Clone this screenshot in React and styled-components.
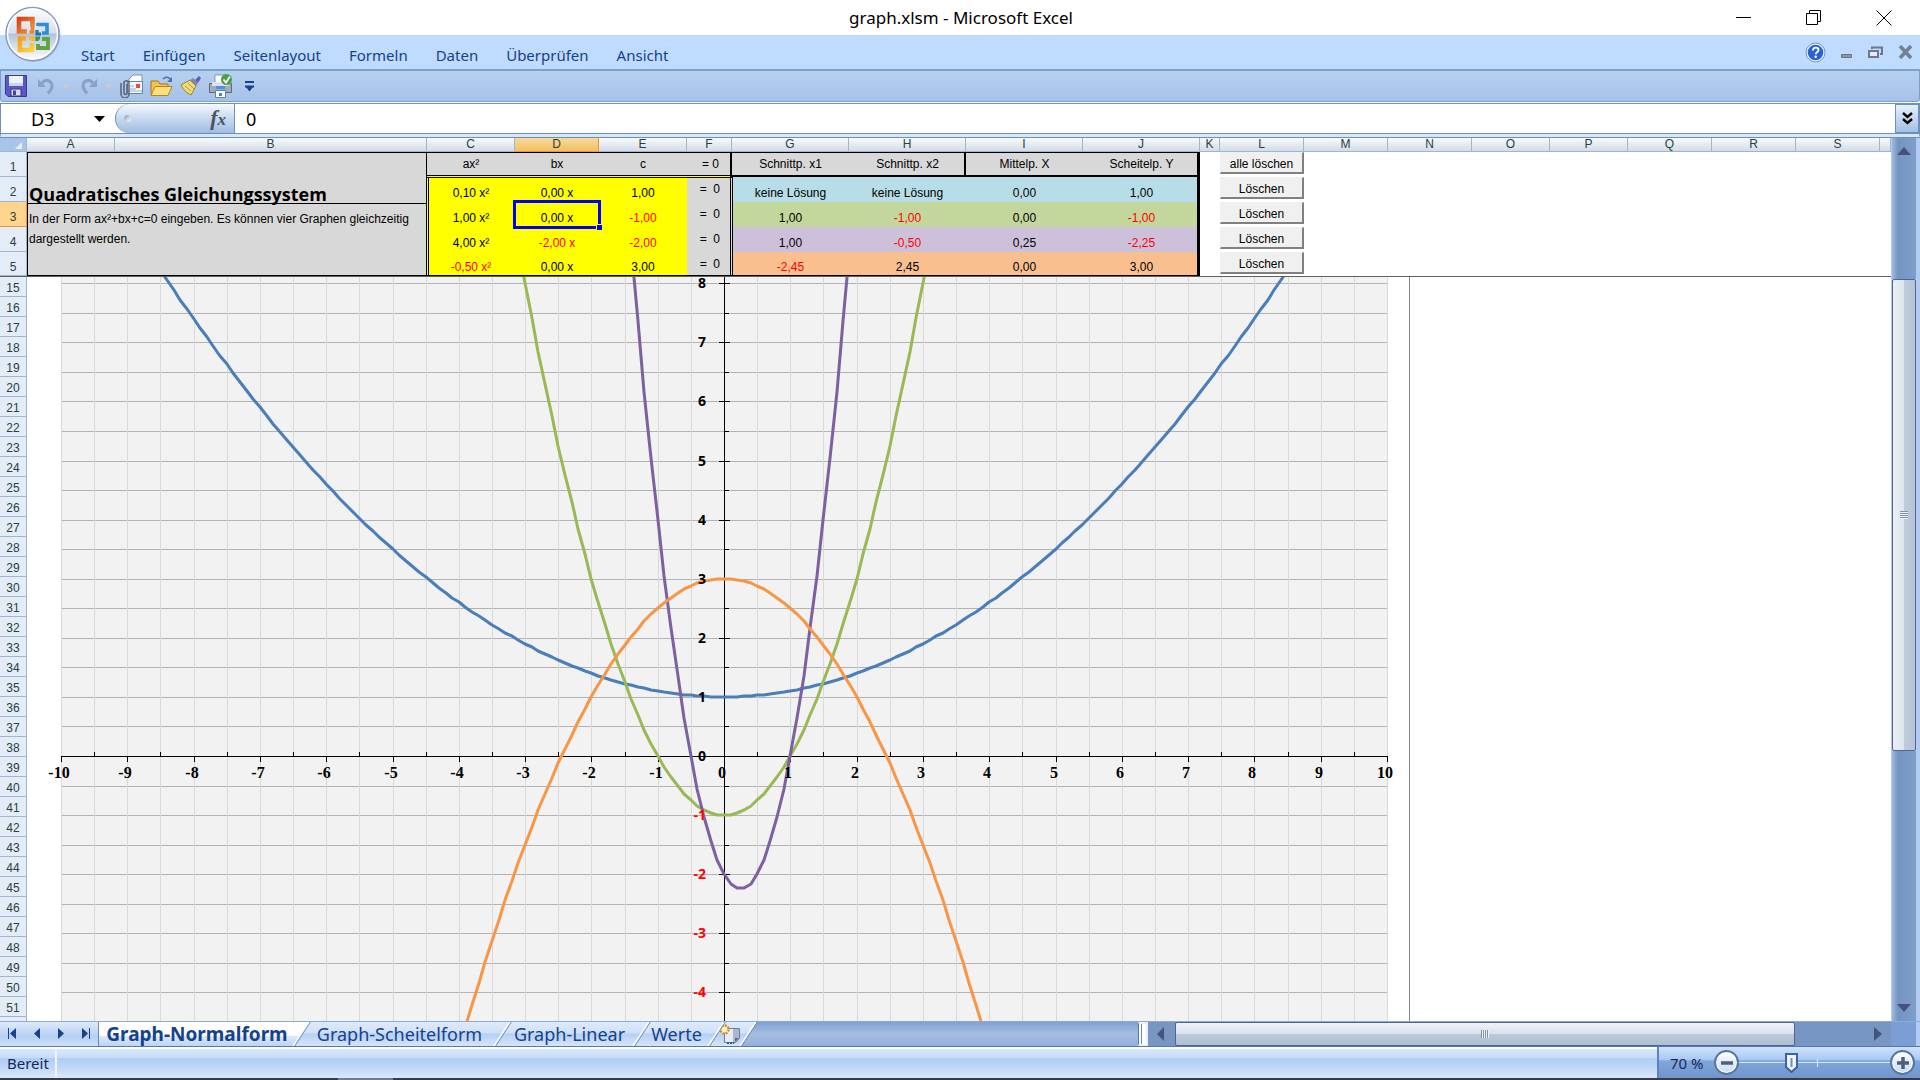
import { useState } from "react";
import styled, { createGlobalStyle, css } from "styled-components";

const columns = [
    ["A", 88], ["B", 312], ["C", 88], ["D", 84], ["E", 88], ["F", 45],
    ["G", 117], ["H", 117], ["I", 117], ["J", 117], ["K", 20], ["L", 84],
    ["M", 84], ["N", 84], ["O", 78], ["P", 78], ["Q", 84], ["R", 84], ["S", 84],
];

const rows = [
    { nr: 2, color: "#b7dde8", input: ["0,10 x²", "0,00 x", "1,00"], result: ["keine Lösung", "keine Lösung", "0,00", "1,00"] },
    { nr: 3, color: "#c3d69b", input: ["1,00 x²", "0,00 x", "-1,00"], result: ["1,00", "-1,00", "0,00", "-1,00"] },
    { nr: 4, color: "#ccc0da", input: ["4,00 x²", "-2,00 x", "-2,00"], result: ["1,00", "-0,50", "0,25", "-2,25"] },
    { nr: 5, color: "#fabf8f", input: ["-0,50 x²", "0,00 x", "3,00"], result: ["-2,45", "2,45", "0,00", "3,00"] },
];

const curves = [
    { a: 0.1, b: 0, c: 1, color: "#4a7ebb" },
    { a: 1, b: 0, c: -1, color: "#98b954" },
    { a: 4, b: -2, c: -2, color: "#7d60a0" },
    { a: -0.5, b: 0, c: 3, color: "#f79646" },
];

const menu = ["Start", "Einfügen", "Seitenlayout", "Formeln", "Daten", "Überprüfen", "Ansicht"];

const sheets = [
    ["Graph-Normalform", 204],
    ["Graph-Scheitelform", 201],
    ["Graph-Linear", 139],
    ["Werte", 75],
];

const lowerRows = Array.from({ length: 37 }, (_, i) => i + 15);

//coordinate system: origin and length of one unit
const originX = 697;
const originY = 479;
const unitX = 66.3;
const unitY = 59.1;
const toX = (x) => Math.round(originX + x * unitX);
const toY = (y) => Math.round(originY - y * unitY);

const range = (from, to, step) => {
    const list = [];
    for (let i = 0; i <= Math.round((to - from) / step); i++) list.push(from + i * step);
    return list;
};

const Chart = () => (
    <ChartSvg width="1383" height="980" aria-label="Graphen">
        <rect x={toX(-10)} y="0" width={toX(10) - toX(-10)} height="980" fill="#f2f2f2" />
        {range(-8, 8.5, 0.5).map((y) => (
            <path key={y} d={`M${toX(-10)} ${toY(y) + 0.5}H${toX(10)}`} stroke="#b3b3b3" />
        ))}
        {range(-10, 10, 0.5).map((x) => (
            <path key={x} d={`M${toX(x) + 0.5} 0V980`} stroke="#d9d9d9" />
        ))}
        <path d={`M${toX(-10)} ${originY + 0.5}H${toX(10)}M${originX + 0.5} 0V980`} stroke="#000" />
        {range(-10, 10, 0.5).map((x) => (
            <path key={x} d={`M${toX(x) + 0.5} ${originY}v${Number.isInteger(x) ? 6 : -4}`} stroke="#000" />
        ))}
        {range(-8, 8, 0.5).map((y) => (
            <path
                key={y}
                d={Number.isInteger(y) ? `M${originX - 5} ${toY(y) + 0.5}h11` : `M${originX} ${toY(y) + 0.5}h5`}
                stroke="#000"
            />
        ))}
        {curves.map(({ a, b, c, color }) => (
            <polyline
                key={color}
                points={range(-10, 10, 0.1)
                    .map((x) => [toX(x), toY(a * x * x + b * x + c)])
                    .filter(([, y]) => y > -400 && y < 1400)
                    .map((p) => p.join(","))
                    .join(" ")}
                fill="none"
                stroke={color}
                strokeWidth="3"
                strokeLinejoin="round"
            />
        ))}
        {range(-10, 10, 1).map((x) => (
            <AxisX key={x} x={toX(x) - 2} y={originY + 22} textAnchor="middle">{x}</AxisX>
        ))}
        {range(-4, 8, 1).map((y) => (
            <AxisY key={y} x={originX - 18} y={toY(y) + 5} textAnchor="end" fill={y < 0 ? "#f00" : "#000"}>{y}</AxisY>
        ))}
        <path d="M1382.5 0V980" stroke="#868686" />
    </ChartSvg>
);

const OfficeLogo = () => (
    <svg width="56" height="57" viewBox="0 0 56 57">
        <defs>
            <linearGradient id="orb" x1="0" y1="0" x2="0" y2="1">
                <stop offset="0" stopColor="#fdfeff" />
                <stop offset=".48" stopColor="#d7dfec" />
                <stop offset=".5" stopColor="#b3c2dc" />
                <stop offset="1" stopColor="#fff" />
            </linearGradient>
            <linearGradient id="orange" x1="0" y1="0" x2="1" y2="1">
                <stop offset="0" stopColor="#d8431b" />
                <stop offset="1" stopColor="#f3973a" />
            </linearGradient>
            <linearGradient id="gold" x1="0" y1="0" x2="1" y2="1">
                <stop offset="0" stopColor="#f6a11a" />
                <stop offset="1" stopColor="#fdd23a" />
            </linearGradient>
        </defs>
        <circle cx="28.500" cy="29" r="27" fill="#8f9db5" opacity=".5" />
        <circle cx="27.500" cy="28" r="26.500" fill="url(#orb)" stroke="#8398bd" strokeWidth="1.500" />
        <circle cx="27.500" cy="28" r="25" fill="none" stroke="#fff" strokeWidth="1.500" />
        <g fill="none">
            <path d="M22 25.500H14V13h13.500v8" stroke="url(#orange)" strokeWidth="4.600" />
            <path d="M27.500 21v5h-3" stroke="#f0862b" strokeWidth="3.600" />
            <path d="M33 20v-1.500h9V27h-5" stroke="#2f8fd6" strokeWidth="3.600" />
            <path d="M32 24v4h4" stroke="#1873c0" strokeWidth="3.200" />
            <path d="M21 32.500h-6V44h12v-7" stroke="url(#gold)" strokeWidth="4.600" />
            <path d="M24 32h4v3" stroke="#f9b62a" strokeWidth="3.400" />
            <path d="M37 33h6v9H33v-4" stroke="#5ea53a" strokeWidth="3.800" />
            <path d="M32 35v-3h3" stroke="#2f9a4c" strokeWidth="3.200" />
        </g>
    </svg>
);

const SaveIcon = () => (
    <svg width="22" height="22" viewBox="0 0 22 22">
        <path d="M.5.500h21v21H3l-2.500-2.500z" fill="#5b57c4" stroke="#3a3796" />
        <path d="M4 1h14v10H4z" fill="#eef3fc" />
        <path d="M4 8h14v3H4z" fill="#c9d6ee" />
        <path d="M6 14h10v7H6z" fill="#d4dbea" stroke="#38368c" />
        <path d="M8 15.500h3V20H8z" fill="#45429f" />
    </svg>
);

const UndoIcon = ({ flip }) => (
    <svg width="18" height="18" viewBox="0 0 18 18">
        <g transform={flip ? "translate(18 0) scale(-1 1)" : undefined}>
            <path d="M5 6c4-5 10-2 10 3 0 3-2 5-4 7.500" fill="none" stroke="#8aa0c6" strokeWidth="3" />
            <path d="M1 2v8h8z" fill="#8aa0c6" />
        </g>
    </svg>
);

const MailIcon = () => (
    <svg width="25" height="24" viewBox="0 0 25 24">
        <path d="M10 5l4-4h9v8H10z" fill="#fff" stroke="#7891ba" />
        <path d="M8.500 7.500h15v12h-15z" fill="#f4f8fe" stroke="#6782b0" />
        <path d="M17 10h4v4h-4z" fill="#e2502c" />
        <path d="M11 12h4M11 15h6M9 17h14" stroke="#97add2" />
        <path d="M8 10v9a1.500 1.500 0 0 1-3 0V8a3 3 0 0 1 5 0v12a4 4 0 0 1-8 0V9" fill="none" stroke="#56617a" strokeWidth="1.500" />
    </svg>
);

const FolderIcon = () => (
    <svg width="24" height="22" viewBox="0 0 24 22">
        <path d="M1 19V6h7l2 3h8v11z" fill="#f3c548" stroke="#a8761b" />
        <path d="M1 20.500l4-9h17l-4 9z" fill="#fddf7c" stroke="#b5851f" />
        <path d="M13 4c3-3 6-2 8 1" fill="none" stroke="#4b74a9" strokeWidth="1.500" />
        <path d="M22 2v5h-5z" fill="#4b74a9" />
    </svg>
);

const BrushIcon = () => (
    <svg width="22" height="20" viewBox="0 0 22 20">
        <path d="M1 9l9-5 6 6-5 9c-4-2-8-5-10-10z" fill="#efdb78" stroke="#9a8130" />
        <path d="M5 10l6 5M8 7l6 6" stroke="#b89a3d" />
        <path d="M10 4l3-2 5 5-2 3z" fill="#7d8aa5" />
        <path d="M15 4l4-4 2 2-3 5z" fill="#6b58b5" />
    </svg>
);

const PrinterIcon = () => (
    <svg width="25" height="25" viewBox="0 0 25 25">
        <path d="M7 1h10v10H7z" fill="#fff" stroke="#8a96ac" />
        <path d="M1.500 9.500h22v9h-22z" fill="#a2abba" stroke="#5e6879" />
        <path d="M4 8h17v4H4z" fill="#dce2ea" />
        <path d="M8 12h9v3H8z" fill="#4593e6" />
        <path d="M7.500 16.500h10v7h-10z" fill="#fff" stroke="#68809f" />
        <path d="M11 19h3v3h-3z" fill="#3e83d4" />
        <circle cx="18.500" cy="5.500" r="5.500" fill="#4a9f49" />
        <path d="M15.500 5.500l2.500 3 4-6" fill="none" stroke="#fff" strokeWidth="1.700" />
    </svg>
);

const CustomizeIcon = () => (
    <svg width="10" height="12" viewBox="0 0 10 12">
        <path d="M0 2h9M0 6.500h9" stroke="#15428b" strokeWidth="2" />
        <path d="M1 7h7l-3.500 4.500z" fill="#15428b" />
    </svg>
);

const HelpIcon = () => (
    <svg width="21" height="21" viewBox="0 0 21 21">
        <circle cx="10.500" cy="10.500" r="9.500" fill="#e8f1fc" stroke="#7396c7" />
        <circle cx="10.500" cy="10.500" r="7.800" fill="#2a63d4" />
        <path d="M8 8.500c0-4 5.500-3.500 5.500-.5 0 2-2.700 2-2.700 4.300" fill="none" stroke="#fff" strokeWidth="1.900" />
        <circle cx="10.700" cy="14.800" r="1.200" fill="#fff" />
    </svg>
);

const ArrowIcon = ({ d, width = 8, height = 14 }) => (
    <svg width={width} height={height} viewBox={`0 0 ${width} ${height}`}>
        <path d={d} fill="currentColor" />
    </svg>
);

const NewSheetIcon = () => (
    <svg width="22" height="20" viewBox="0 0 22 20">
        <path d="M5.500 4.500h15v10l-4 4h-11z" fill="#e6ecf6" stroke="#6d7c98" />
        <path d="M14 5h6v9l-4 4h-2z" fill="#a9b7cf" />
        <path d="M20 14l-4 4v-4z" fill="#5c6a87" />
        <path d="M8 19h7" stroke="#46536f" strokeDasharray="2 1" strokeWidth="2" />
        <circle cx="5.500" cy="5.500" r="4" fill="#fff3c4" stroke="#cf8a1c" strokeWidth="2.400" strokeDasharray="2 1.100" />
    </svg>
);

const isNegative = (text) => text.startsWith("-");

const App = () => {
    const [value, setValue] = useState("0");
    const [zoom, setZoom] = useState(70);

    return (
        <Window>
            <GlobalStyle />
            <TitleBar>
                <OfficeButton aria-label="Office"><OfficeLogo /></OfficeButton>
                <Title>graph.xlsm - Microsoft Excel</Title>
                <WindowButtons>
                    <IconButton aria-label="Minimieren">
                        <svg width="16" height="16"><path d="M0 7.500h15" stroke="#000" /></svg>
                    </IconButton>
                    <IconButton aria-label="Wiederherstellen">
                        <svg width="16" height="16">
                            <path d="M.5 3.500h11v11H.500zM3.500 3.500V.500h11v11h-3" fill="none" stroke="#000" />
                        </svg>
                    </IconButton>
                    <IconButton aria-label="Schließen">
                        <svg width="16" height="16"><path d="M.5.500l15 15M15.500.500l-15 15" stroke="#000" /></svg>
                    </IconButton>
                </WindowButtons>
            </TitleBar>

            <Ribbon>
                <Menu>
                    {menu.map((item) => <MenuLink href="#" key={item}>{item}</MenuLink>)}
                </Menu>
                <MdiButtons>
                    <IconButton aria-label="Hilfe"><HelpIcon /></IconButton>
                    <IconButton aria-label="Mappe minimieren">
                        <svg width="12" height="14"><path d="M.5 9.500h10v3H.500z" fill="#8c96a4" stroke="#6d7785" /></svg>
                    </IconButton>
                    <IconButton aria-label="Mappe wiederherstellen">
                        <svg width="15" height="13">
                            <path d="M4 3V1.500h10V8h-2" fill="none" stroke="#6f7986" strokeWidth="2" />
                            <path d="M1 5h9v6H1z" fill="#e3ebf5" stroke="#6f7986" strokeWidth="2" />
                        </svg>
                    </IconButton>
                    <IconButton aria-label="Mappe schließen">
                        <svg width="15" height="14"><path d="M2 1l11 12M13 1L2 13" stroke="#76808e" strokeWidth="3.600" /></svg>
                    </IconButton>
                </MdiButtons>
            </Ribbon>

            <QuickAccess>
                <IconButton aria-label="Speichern"><SaveIcon /></IconButton>
                <IconGroup>
                    <IconButton aria-label="Rückgängig"><UndoIcon /></IconButton>
                    <Faded><ArrowIcon d="M0 0h8L4 5z" height={5} /></Faded>
                </IconGroup>
                <IconGroup>
                    <IconButton aria-label="Wiederholen"><UndoIcon flip /></IconButton>
                    <Faded><ArrowIcon d="M0 0h8L4 5z" height={5} /></Faded>
                </IconGroup>
                <IconButton aria-label="E-Mail"><MailIcon /></IconButton>
                <IconButton aria-label="Öffnen"><FolderIcon /></IconButton>
                <IconButton aria-label="Format übertragen"><BrushIcon /></IconButton>
                <IconButton aria-label="Drucken"><PrinterIcon /></IconButton>
                <Customize aria-label="Anpassen"><CustomizeIcon /></Customize>
            </QuickAccess>

            <FormulaBar>
                <NameBox>
                    <NameInput aria-label="Namenfeld" defaultValue="D3" />
                    <ArrowIcon d="M0 0h11L5.500 6z" width={11} height={6} />
                </NameBox>
                <FormulaTools>
                    <Knob />
                    <Fx aria-label="Funktion einfügen">f<small>x</small></Fx>
                </FormulaTools>
                <FormulaInput aria-label="Formel" value={value} onChange={(e) => setValue(e.target.value)} />
                <Expand aria-label="Erweitern">
                    <svg width="11" height="13">
                        <path d="M1 1l4.500 4L10 1M1 7l4.500 4L10 7" fill="none" stroke="#000" strokeWidth="2.400" />
                    </svg>
                </Expand>
            </FormulaBar>

            <Workbook>
                <Sheet>
                    <Frozen>
                        <colgroup>
                            <Col $w={27} />
                            {columns.map(([name, w]) => <Col key={name} $w={w} />)}
                            <col />
                        </colgroup>
                        <thead>
                            <tr>
                                <Corner><svg width="26" height="13"><path d="M22 4v7h-7z" fill="#e8f0fb" /></svg></Corner>
                                {columns.map(([name]) => (
                                    <ColHead key={name} $active={name === "D"}>{name}</ColHead>
                                ))}
                                <ColHead />
                            </tr>
                        </thead>
                        <tbody>
                            <tr>
                                <RowHead>1</RowHead>
                                <Info colSpan={2} rowSpan={5}>
                                    <Heading>Quadratisches Gleichungssystem</Heading>
                                    <Hint>In der Form ax²+bx+c=0 eingeben. Es können vier Graphen gleichzeitig dargestellt werden.</Hint>
                                </Info>
                                <Label $double>ax²</Label>
                                <Label $double>bx</Label>
                                <Label $double>c</Label>
                                <Label $double $right $line={2}>= 0</Label>
                                <Label>Schnittp. x1</Label>
                                <Label $line={2}>Schnittp. x2</Label>
                                <Label>Mittelp. X</Label>
                                <Label $line={3}>Scheitelp. Y</Label>
                                <td />
                                <td><ClearButton>alle löschen</ClearButton></td>
                            </tr>
                            {rows.map(({ nr, color, input, result }) => (
                                <tr key={nr}>
                                    <RowHead $active={nr === 3}>{nr}</RowHead>
                                    {input.map((text, i) => (
                                        <Input key={i} $red={isNegative(text)} $first={i === 0} $top={nr === 2} $bottom={nr === 5}>
                                            {text}
                                            {nr === 3 && i === 1 && <Selection />}
                                        </Input>
                                    ))}
                                    <Equals $top={nr === 2} $bottom={nr === 5}>=&nbsp; 0</Equals>
                                    {result.map((text, i) => (
                                        <Result key={i} $color={color} $red={isNegative(text)} $first={i === 0} $last={i === 3} $bottom={nr === 5}>
                                            {text}
                                        </Result>
                                    ))}
                                    <td />
                                    <td><ClearButton>Löschen</ClearButton></td>
                                </tr>
                            ))}
                        </tbody>
                    </Frozen>
                    <Lower>
                        <LowerHeads>
                            {lowerRows.map((nr) => <LowerHead key={nr}>{nr}</LowerHead>)}
                            <LowerHead />
                        </LowerHeads>
                        <Chart />
                    </Lower>
                </Sheet>
                <VScroll>
                    <VBefore><ArrowIcon d="M0 8L7 0l7 8z" width={14} height={8} /></VBefore>
                    <VThumb><Grip /></VThumb>
                    <VAfter><ArrowIcon d="M0 0h14L7 8z" width={14} height={8} /></VAfter>
                </VScroll>
            </Workbook>

            <TabBar>
                <TabNav>
                    <IconButton aria-label="Erstes Blatt"><ArrowIcon d="M0 1h1v11H0zM8 1v11L2 6.500z" /></IconButton>
                    <IconButton aria-label="Vorheriges Blatt"><ArrowIcon d="M7 1v11L1 6.500z" /></IconButton>
                    <IconButton aria-label="Nächstes Blatt"><ArrowIcon d="M1 1v11l6-5.500z" /></IconButton>
                    <IconButton aria-label="Letztes Blatt"><ArrowIcon d="M0 1v11l6-5.500zM7 1h1v11H7z" /></IconButton>
                </TabNav>
                {sheets.map(([name, w], i) => (
                    <Tab key={name} $w={w} $active={i === 0} $z={9 - i}>{name}</Tab>
                ))}
                <Tab $w={32} $z={1} aria-label="Neues Blatt"><NewSheetIcon /></Tab>
                <TabSpace />
                <HScroll>
                    <Splitter />
                    <HEnd><ArrowIcon d="M7 0v14L0 7z" /></HEnd>
                    <HTrack><HThumb><Grip $turned /></HThumb></HTrack>
                    <HEnd><ArrowIcon d="M0 0v14l8-7z" /></HEnd>
                </HScroll>
                <TabCorner />
            </TabBar>

            <StatusBar>
                <Status>Bereit</Status>
                <ZoomArea>
                    <ZoomLabel htmlFor="zoom">{zoom} %</ZoomLabel>
                    <RoundButton aria-label="Verkleinern" onClick={() => setZoom(Math.max(10, zoom - 10))}>
                        <svg width="12" height="12"><path d="M0 6h12" stroke="#4c5f7d" strokeWidth="3.500" /></svg>
                    </RoundButton>
                    <ZoomRange id="zoom" type="range" min="10" max="190" value={zoom} onChange={(e) => setZoom(Number(e.target.value))} />
                    <RoundButton aria-label="Vergrößern" onClick={() => setZoom(Math.min(190, zoom + 10))}>
                        <svg width="12" height="12"><path d="M0 6h12M6 0v12" stroke="#4c5f7d" strokeWidth="3.500" /></svg>
                    </RoundButton>
                </ZoomArea>
            </StatusBar>
            <Taskbar />
        </Window>
    );
};

//--- Styling ---

const GlobalStyle = createGlobalStyle`
*, *::before, *::after {
    box-sizing: border-box;
}
body {
    margin: 0;
    background: #fff;
    font-family: "Noto Sans", "Open Sans", sans-serif;
}
button, input {
    font: inherit;
    color: inherit;
    margin: 0;
    padding: 0;
    border: 0;
    background: none;
}
svg {
    display: block;
    flex: none;
}
`

const Window = styled.div`
display: flex;
flex-direction: column;
height: 100vh;
overflow: hidden;
`

const IconButton = styled.button`
display: flex;
align-items: center;
justify-content: center;
`

const TitleBar = styled.header`
position: relative;
display: grid;
grid-template-columns: 1fr auto 1fr;
align-items: center;
flex: none;
height: 35px;
`

/* the round button hangs over the title bar and the ribbon */
const OfficeButton = styled.button`
position: absolute;
left: 5px;
top: 6px;
z-index: 2;
`

const Title = styled.h1`
grid-column: 2;
margin: 0;
padding-left: 2px;
font-size: 17px;
font-weight: 400;
line-height: 22px;
`

const WindowButtons = styled.div`
display: flex;
justify-content: flex-end;
gap: 54px;
padding-right: 28px;
`

const Ribbon = styled.div`
display: flex;
justify-content: space-between;
align-items: center;
flex: none;
height: 34px;
padding: 0 7px 0 81px;
background: #bfdbff;
`

const Menu = styled.nav`
display: flex;
gap: 28px;
padding-top: 6px;
`

const MenuLink = styled.a`
color: #15428b;
font-size: 15px;
line-height: 22px;
text-decoration: none;
`

const MdiButtons = styled.div`
display: flex;
align-items: center;
gap: 15px;
`

const QuickAccess = styled.div`
display: flex;
align-items: center;
gap: 6px;
flex: none;
height: 33px;
padding-left: 4px;
border: 1px solid #7c9fce;
border-top-width: 2px;
border-radius: 0 0 3px 3px;
background: linear-gradient(#b5d0ef, #a6c1e8);
`

const IconGroup = styled.div`
display: flex;
align-items: center;
gap: 7px;
padding-left: 4px;
`

const Faded = styled.span`
color: #c9c9cd;
`

const Customize = styled(IconButton)`
padding-left: 6px;
`

const FormulaBar = styled.div`
display: flex;
flex: none;
height: 35px;
margin-top: 1px;
border: 1px solid #6c8fbb;
border-bottom: 4px solid #d7e6f9;
box-shadow: inset 0 -1px #6c8fbb;
background: #fff;
`

const NameBox = styled.div`
display: flex;
align-items: center;
width: 114px;
padding: 0 10px 0 30px;
`

const NameInput = styled.input`
flex: 1;
min-width: 0;
font-size: 18px;
line-height: 24px;
outline: 0;
`

const FormulaTools = styled.div`
display: flex;
align-items: center;
justify-content: space-between;
width: 120px;
margin-bottom: 1px;
padding: 0 8px 0 8px;
border: 1px solid #6c8fbb;
border-width: 0 1px;
border-radius: 16px 0 0 16px;
background: linear-gradient(#f4f9ff, #c8d9ef 50%, #9fbce2);
`

const Knob = styled.span`
width: 7px;
height: 7px;
border-radius: 50%;
background: linear-gradient(135deg, #8f9bb0, #fff);
`

const Fx = styled.button`
color: #4a5361;
font: italic bold 22px/24px "Liberation Serif", serif;

small {
    font-size: 17px;
}
`

const FormulaInput = styled.input`
flex: 1;
min-width: 0;
padding-left: 11px;
font-size: 18px;
line-height: 24px;
outline: 0;
`

const Expand = styled(IconButton)`
width: 24px;
margin-bottom: 1px;
border: 1px solid #6c8fbb;
background: linear-gradient(#e6f0fc, #a3bfe5);
`

const Workbook = styled.main`
display: flex;
flex: 1;
min-height: 0;
border-top: 1px solid #6c8fbb;
margin-top: -1px;
`

const Sheet = styled.div`
display: flex;
flex-direction: column;
flex: 1;
min-width: 0;
overflow: hidden;
font: 12px/14px "Liberation Sans", Arial, sans-serif;
`

const Frozen = styled.table`
flex: none;
width: 100%;
table-layout: fixed;
border-collapse: separate;
border-spacing: 0;
border-bottom: 1px solid #606060;

td, th {
    padding: 0;
    font-weight: 400;
}

td {
    height: 25px;
    vertical-align: top;
}

tbody tr:last-child > td, tbody tr:last-child > th {
    height: 24px;
}
`

const Col = styled.col`
width: ${(props) => props.$w}px;
`

const headCell = css`
color: #27413e;
border: 0 solid #9eb6ce;
border-width: 0 1px 1px 0;
`

const Corner = styled.th`
${headCell}
height: 14px;
background: #a9c4e9;
`

const ColHead = styled.th`
${headCell}
height: 14px;
line-height: 13px;
text-align: center;
background: linear-gradient(#f8fbfd, #d3dbe9);

${(props) => props.$active && css`
    border-color: #f29536;
    background: linear-gradient(#f9d99f, #f1c15f);
`}
`

const RowHead = styled.th`
${headCell}
height: 25px;
padding-top: 6px !important;
vertical-align: middle;
background: #e4ecf7;

${(props) => props.$active && css`
    border-color: #f29536;
    background: #ffd58d;
`}
`

const Info = styled.td`
border: 1px solid #000;
background: #d8d8d8;
`

const Heading = styled.h2`
display: flex;
align-items: flex-end;
height: 51px;
margin: 0;
padding-left: 1px;
border-bottom: 1px solid #000;
font: bold 18px/18px "Open Sans", sans-serif;
white-space: nowrap;
`

const Hint = styled.p`
margin: 5px 10px 0 1px;
line-height: 20px;
`

const Label = styled.td`
background: #d8d8d8;
border-top: 1px solid #000;
line-height: 22px;
text-align: ${(props) => (props.$right ? "right" : "center")};
padding-right: ${(props) => (props.$right ? 13 : 0)}px !important;
box-shadow:
    inset -${(props) => props.$line || 0}px 0 #000,
    ${(props) => (props.$double ? "inset 0 -1px #ff0, inset 0 -2px #000" : "inset 0 -2px #000")};
`

const Value = styled.td`
position: relative;
padding-top: ${(props) => (props.$bottom ? 8 : 9)}px !important;
color: ${(props) => (props.$red ? "#f00" : "#000")};
text-align: center;
${(props) => props.$bottom && "border-bottom: 1px solid #000;"}
`

const Input = styled(Value)`
background: #ff0;
box-shadow:
    inset 0 ${(props) => (props.$top ? 1 : 0)}px #000
    ${(props) => props.$first && ", inset 1px 0 #ff0, inset 2px 0 #000"};
`

const Equals = styled(Value)`
background: #d8d8d8;
padding-top: 5px !important;
padding-right: 12px !important;
text-align: right;
box-shadow:
    inset 0 ${(props) => (props.$top ? 1 : 0)}px #000,
    inset -1px 0 #d8d8d8,
    inset -2px 0 #000;
`

const Result = styled(Value)`
background: ${(props) => props.$color};
box-shadow:
    inset ${(props) => (props.$first ? 1 : 0)}px 0 #000,
    inset ${(props) => (props.$last ? -3 : 0)}px 0 #000;
`

/* frame of the selected cell with its fill handle */
const Selection = styled.span`
position: absolute;
inset: -2px;
z-index: 1;
border: 3px solid #00f;

&::after {
    content: "";
    position: absolute;
    right: -4px;
    bottom: -4px;
    width: 6px;
    height: 6px;
    border: 1px solid #ff0;
    border-width: 1px 0 0 1px;
    background: #00f;
}
`

const ClearButton = styled.button`
display: block;
width: 100%;
height: 22px;
padding-top: 3px;
border: 1px solid #f0f0f0;
border-right: 2px solid #808080;
border-bottom: 2px solid #808080;
background: #f0f0f0;
line-height: 16px;
`

const Lower = styled.div`
display: flex;
flex: 1;
min-height: 0;
overflow: hidden;
`

const LowerHeads = styled.div`
flex: none;
width: 27px;
`

const LowerHead = styled.div`
${headCell}
height: 20px;
padding-top: 4px;
background: #e4ecf7;
text-align: center;
line-height: 14px;
`

const ChartSvg = styled.svg`
align-self: flex-start;
`

const AxisX = styled.text`
font: bold 16px "Liberation Serif", serif;
`

const AxisY = styled.text`
font: bold 14px "Open Sans", sans-serif;
`

const VScroll = styled.div`
display: flex;
flex-direction: column;
flex: none;
width: 29px;
padding: 0 4px 0 1px;
background: #b1cbf2;
color: #46527a;
`

const VBefore = styled.div`
display: flex;
justify-content: center;
height: 141px;
padding-top: 9px;
background: linear-gradient(90deg, #a0b9dc, #7494c2 25%, #7f9fca);
`

const VThumb = styled.div`
display: flex;
align-items: center;
justify-content: center;
flex: 9;
border: 1px solid #52658f;
border-radius: 2px;
background: linear-gradient(90deg, #eceff5, #dde5ef 48%, #bfccdc 50%, #b5c4d8);
`

const VAfter = styled.div`
display: flex;
align-items: flex-end;
justify-content: center;
flex: 5;
padding-bottom: 9px;
background: linear-gradient(90deg, #a0b9dc, #7494c2 25%, #7f9fca);
`

const Grip = styled.span`
width: 8px;
height: 8px;
background: repeating-linear-gradient(${(props) => (props.$turned ? "90deg" : "180deg")}, #8292ab 0 1px, #eef2f7 1px 2px);
`

const TabBar = styled.div`
display: flex;
flex: none;
height: 26px;
border-top: 1px solid #8caad6;
border-bottom: 1px solid #5478b4;
background: linear-gradient(#7fa1d1, #a5bde1 50%, #93b0dc);
`

const TabNav = styled.div`
display: flex;
align-items: center;
justify-content: space-around;
flex: none;
width: 99px;
border-right: 1px solid #6d88b5;
background: linear-gradient(#dfeafa, #b6d0f4 60%, #cfe0f8);
color: #15428b;
`

const Tab = styled.button`
position: relative;
z-index: ${(props) => props.$z};
display: flex;
align-items: center;
justify-content: center;
flex: none;
width: ${(props) => props.$w}px;
padding-right: 8px;
color: #15428b;
font-size: ${(props) => (props.$active ? 19 : 18)}px;
font-weight: ${(props) => (props.$active ? 700 : 400)};
line-height: 24px;
white-space: nowrap;

/* slanted right edge, the left part lies under the tab before it */
&::before {
    content: "";
    position: absolute;
    z-index: -1;
    inset: 0 0 0 -20px;
    transform: skewX(-33deg);
    border-right: 1px solid #6d88b5;
    box-shadow: inset -2px 0 #fff;
    background: ${(props) => (props.$active
        ? "linear-gradient(#fff 55%, #dbe8fa 60%, #bcd4f5)"
        : "linear-gradient(#dfeafa, #cfe1f9 45%, #b5d0f5 50%, #d5e4f9)")};
}

${(props) => props.$active && css`
    &::before {
        left: 10px;
    }
    background: linear-gradient(#fff 55%, #dbe8fa 60%, #bcd4f5) 0 0 / 40px 100% no-repeat;
`}
`

const TabSpace = styled.div`
flex: 34;
`

const HScroll = styled.div`
display: flex;
flex: 66;
background: #7896c2;
color: #46527a;
`

const Splitter = styled.div`
width: 10px;
border: 2px solid #e8f0fb;
border-left: 1px solid #5478b4;
background: linear-gradient(90deg, #fff 2px, #6d88b5 2px 3px, #fff 3px);
`

const HEnd = styled.div`
display: flex;
align-items: center;
justify-content: center;
width: 27px;
`

const HTrack = styled.div`
display: flex;
flex: 1;
`

const HThumb = styled.div`
display: flex;
align-items: center;
justify-content: center;
width: 90%;
border: 1px solid #52658f;
border-radius: 2px;
background: linear-gradient(#f0f3f8, #dbe2ec 48%, #bccada 50%, #aebfd4);
`

const TabCorner = styled.div`
width: 29px;
border-right: 4px solid #b1cbf2;
background: #7b9fd4;
`

const StatusBar = styled.footer`
display: flex;
justify-content: space-between;
flex: none;
height: 31px;
border-top: 2px solid #fff;
background: linear-gradient(#d9e7fb, #c6dcf8 30%, #afcdf4 33%, #c3daf7 70%, #dbe8fa);
color: #15285a;
`

const Status = styled.div`
display: flex;
align-items: center;
width: 57px;
padding: 0 0 2px 7px;
border-right: 2px solid #eef5fe;
font-size: 15px;
line-height: 20px;
`

const ZoomArea = styled.div`
display: flex;
align-items: center;
width: 263px;
margin-top: -2px;
padding: 0 5px 0 11px;
border-left: 2px solid #5c83bd;
background: linear-gradient(#cfe2fb, #a9c9f5 40%, #7fa6dd 45%, #7195cb);
`

const ZoomLabel = styled.label`
flex: 1;
font-size: 15px;
color: #15285a;
white-space: nowrap;
`

const RoundButton = styled(IconButton)`
flex: none;
width: 25px;
height: 25px;
border: 2px solid #58749f;
border-radius: 50%;
background: linear-gradient(#fff, #c9daf1);
box-shadow: inset 0 0 0 1px #fff;
`

const thumb = encodeURIComponent(
    `<svg xmlns="http://www.w3.org/2000/svg" width="13" height="20"><path d="M1 1h11v13l-5.500 5L1 14z" fill="#eef4fc" stroke="#3f629b" stroke-width="2"/><path d="M6.500 5v9" stroke="#6f8fc0" stroke-width="2"/></svg>`
);

const ZoomRange = styled.input`
appearance: none;
width: 151px;
height: 24px;
background:
    linear-gradient(#e3edfb, #e3edfb) 78px 50% / 1px 8px no-repeat,
    linear-gradient(#dce9fb, #dce9fb) 0 50% / 100% 1px no-repeat;

&::-webkit-slider-thumb {
    appearance: none;
    width: 13px;
    height: 20px;
    background: url("data:image/svg+xml,${thumb}") no-repeat;
}
`

const Taskbar = styled.div`
flex: none;
height: 2px;
background: linear-gradient(90deg, #383a45 338px, #777a82 338px 393px, #383a45 393px);
`

export default App;
